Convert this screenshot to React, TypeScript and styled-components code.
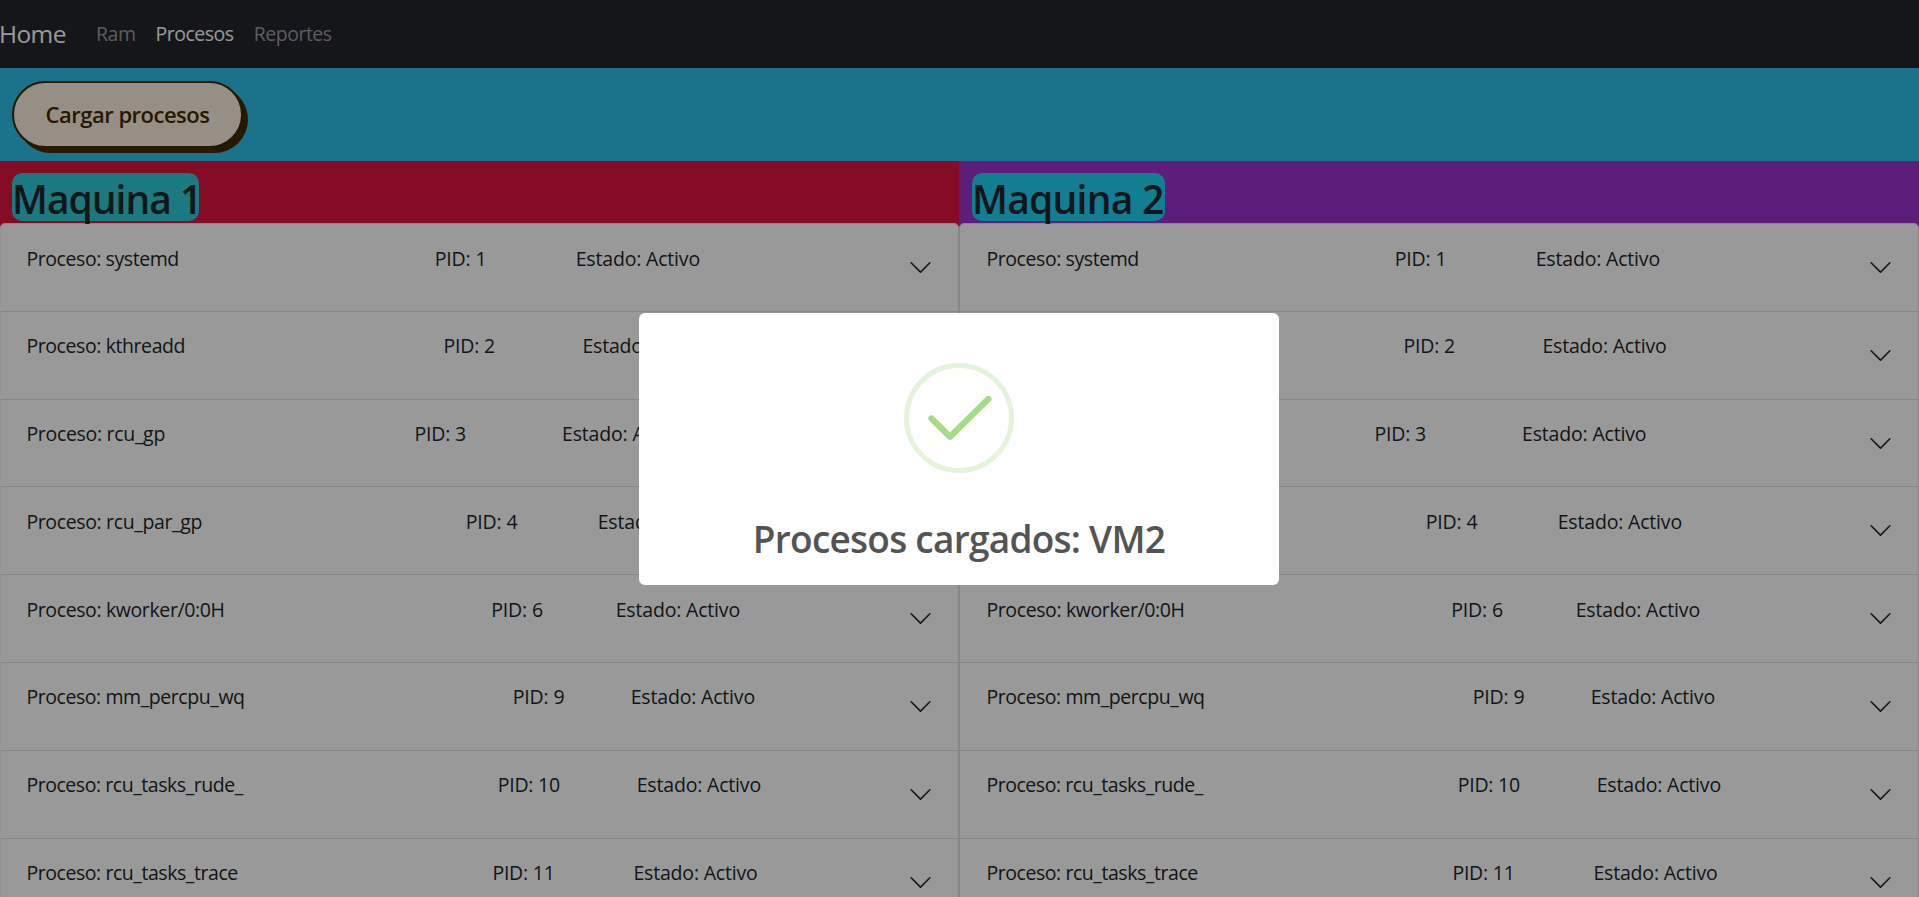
import React from 'react';
import styled, { createGlobalStyle } from 'styled-components';

const GlobalStyle = createGlobalStyle`
  * { box-sizing: border-box; }
  html, body { margin: 0; height: 100%; overflow: hidden; }
  body {
    background: #fff;
    color: #212529;
    font-family: 'Open Sans', 'Noto Sans', sans-serif;
    font-size: 19.5px;
    line-height: 30px;
  }
`;

const Page = styled.div`
  height: 897px;
  overflow: hidden;
`;

const Navbar = styled.nav`
  display: flex;
  align-items: center;
  height: 68px;
  background: #23252a;
`;

const Brand = styled.a`
  width: 87px;
  margin-left: -1px;
  color: #fff;
  font-size: 24.5px;
  letter-spacing: -0.6px;
`;

const NavLink = styled.a<{ $active?: boolean }>`
  padding: 0 10px;
  letter-spacing: -0.48px;
  color: ${(p) => (p.$active ? '#fff' : 'rgba(255, 255, 255, 0.55)')};
`;

const Toolbar = styled.div`
  height: 93px;
  padding: 13px 12px 0;
  background: #2dc0e8;
`;

const LoadButton = styled.button`
  display: flex;
  align-items: center;
  justify-content: center;
  width: 231px;
  height: 67px;
  padding: 0 0 2px;
  border: 2px solid #422800;
  border-radius: 37.5px;
  background: #fbeee0;
  box-shadow: #422800 5px 5px 0 0;
  color: #422800;
  font-family: inherit;
  font-size: 22px;
  font-weight: 600;
  letter-spacing: -0.5px;
`;

const Machines = styled.main`
  display: grid;
  grid-template-columns: 959px 1fr;
`;

const Machine = styled.section<{ $color: string }>`
  background: ${(p) => p.$color};
`;

const MachineHeader = styled.header`
  height: 62px;
  padding: 12px 12px 0;
`;

const MachineTitle = styled.h1<{ $width: number; $track: number; $offset?: number }>`
  width: ${(p) => p.$width}px;
  height: 48px;
  margin: 0 0 0 ${(p) => p.$offset ?? 0}px;
  border-radius: 10px;
  background: rgba(0, 250, 252, 0.8);
  font-size: 39px;
  font-weight: 600;
  line-height: 51px;
  letter-spacing: ${(p) => p.$track}px;
  white-space: nowrap;
`;

const Accordion = styled.div<{ $edge: string; $inset: number }>`
  overflow: hidden;
  padding-left: ${(p) => p.$inset}px;
  border: 1px solid #dfdfdf;
  border-left-color: ${(p) => p.$edge};
  border-radius: 5px 5px 0 0;
  background: #fff;
`;

const Row = styled.div<{ $inset: number }>`
  display: flex;
  align-items: flex-start;
  height: 87.8px;
  margin-left: -${(p) => p.$inset}px;
  padding: 19.5px 25px 0 ${(p) => 25.4 + p.$inset}px;
  border-bottom: 1px solid #dfdfdf;
  white-space: nowrap;
`;

const NameCell = styled.span<{ $width: number; $track: number }>`
  width: ${(p) => p.$width}px;
  letter-spacing: ${(p) => p.$track}px;
`;

const PidCell = styled.span<{ $width: number; $track: number }>`
  width: ${(p) => p.$width}px;
  letter-spacing: ${(p) => p.$track}px;
`;

const StateCell = styled.span`
  flex: 1;
  letter-spacing: -0.18px;
`;

const Chevron = styled.svg`
  width: 25px;
  height: 25px;
  margin-top: 11.5px;
  fill: #212529;
`;

const Overlay = styled.div`
  position: fixed;
  inset: 0;
  display: flex;
  justify-content: center;
  align-items: flex-start;
  padding: 313px 1px 0 0;
  background: rgba(0, 0, 0, 0.4);
`;

const Modal = styled.div`
  width: 640px;
  height: 272px;
  padding-top: 50px;
  border-radius: 6px;
  background: #fff;
  text-align: center;
`;

const SuccessIcon = styled.svg`
  display: block;
  width: 110px;
  height: 110px;
  margin: 0 auto;
`;

const ModalTitle = styled.h2`
  margin: 41px 0 0;
  color: #545454;
  font-size: 37px;
  font-weight: 600;
  line-height: 50px;
  letter-spacing: -0.74px;
`;

interface Process {
  name: string;
  pid: number;
  nameWidth: number;
  pidWidth: number;
  track: number;
}

const processes: Process[] = [
  { name: 'systemd', pid: 1, nameWidth: 408.3, pidWidth: 141, track: -0.42 },
  { name: 'kthreadd', pid: 2, nameWidth: 417, pidWidth: 139, track: -0.41 },
  { name: 'rcu_gp', pid: 3, nameWidth: 388, pidWidth: 147.7, track: -0.31 },
  { name: 'rcu_par_gp', pid: 4, nameWidth: 439.3, pidWidth: 132, track: -0.36 },
  { name: 'kworker/0:0H', pid: 6, nameWidth: 464.8, pidWidth: 124.5, track: -0.38 },
  { name: 'mm_percpu_wq', pid: 9, nameWidth: 486.3, pidWidth: 118, track: -0.43 },
  { name: 'rcu_tasks_rude_', pid: 10, nameWidth: 471.3, pidWidth: 139, track: -0.45 },
  { name: 'rcu_tasks_trace', pid: 11, nameWidth: 466, pidWidth: 141, track: -0.44 },
];

const ProcessList = ({ edge = '#dfdfdf', inset = 0 }: { edge?: string; inset?: number }) => (
  <Accordion $edge={edge} $inset={inset}>
    {processes.map((p) => (
      <Row key={p.pid} $inset={inset}>
        <NameCell $width={p.nameWidth} $track={p.track}>Proceso: {p.name}</NameCell>
        <PidCell $width={p.pidWidth} $track={p.pid > 9 ? -0.23 : -0.16}>PID: {p.pid}</PidCell>
        <StateCell>Estado: Activo</StateCell>
        <Chevron viewBox="0 0 16 16">
          <path
            fillRule="evenodd"
            d="M1.646 4.646a.5.5 0 0 1 .708 0L8 10.293l5.646-5.647a.5.5 0 0 1 .708.708l-6 6a.5.5 0 0 1-.708 0l-6-6a.5.5 0 0 1 0-.708z"
          />
        </Chevron>
      </Row>
    ))}
  </Accordion>
);

export default function App() {
  return (
    <Page>
      <GlobalStyle />
      <Navbar>
        <Brand>Home</Brand>
        <NavLink>Ram</NavLink>
        <NavLink $active>Procesos</NavLink>
        <NavLink>Reportes</NavLink>
      </Navbar>
      <Toolbar>
        <LoadButton>Cargar procesos</LoadButton>
      </Toolbar>
      <Machines>
        <Machine $color="#dc143c">
          <MachineHeader>
            <MachineTitle $width={187} $track={-1}>Maquina 1</MachineTitle>
          </MachineHeader>
          <ProcessList edge="#f7f7f7" />
        </Machine>
        <Machine $color="#9932cc">
          <MachineHeader>
            <MachineTitle $width={193} $track={-0.75} $offset={1}>Maquina 2</MachineTitle>
          </MachineHeader>
          <ProcessList inset={1} />
        </Machine>
      </Machines>
      <Overlay>
        <Modal>
          <SuccessIcon viewBox="0 0 110 110">
            <circle cx="55" cy="55" r="52.5" fill="none" stroke="#a5dc86" strokeOpacity="0.3" strokeWidth="5" />
            <path
              d="M27.5 55.5L46 73.7L84.4 36"
              fill="none"
              stroke="#a5dc86"
              strokeWidth="6.25"
              strokeLinecap="round"
              strokeLinejoin="round"
            />
          </SuccessIcon>
          <ModalTitle>Procesos cargados: VM2</ModalTitle>
        </Modal>
      </Overlay>
    </Page>
  );
}
